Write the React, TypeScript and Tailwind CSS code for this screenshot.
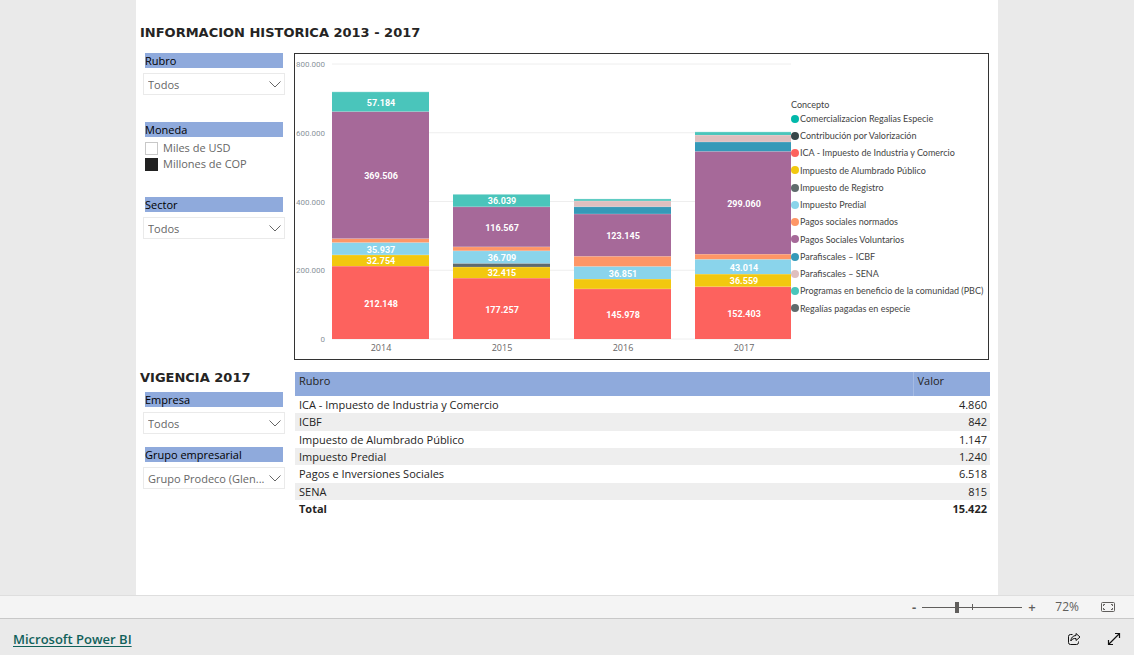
import React, { useState } from "react";

type Segment = { concept: string; value: number; label?: string };
type Bar = { year: string; segments: Segment[] };

const CONCEPTS = [
  { name: "Comercializacion Regalias Especie", color: "#01b8aa" },
  { name: "Contribución por Valorización", color: "#374649" },
  { name: "ICA - Impuesto de Industria y Comercio", color: "#fd625e" },
  { name: "Impuesto de Alumbrado Público", color: "#f2c80f" },
  { name: "Impuesto de Registro", color: "#5f6b6d" },
  { name: "Impuesto Predial", color: "#8ad4eb" },
  { name: "Pagos sociales normados", color: "#fe9666" },
  { name: "Pagos Sociales Voluntarios", color: "#a66999" },
  { name: "Parafiscales – ICBF", color: "#3599b8" },
  { name: "Parafiscales – SENA", color: "#dfbfbf" },
  { name: "Programas en beneficio de la comunidad (PBC)", color: "#4ac5bb" },
  { name: "Regalías pagadas en especie", color: "#5f6b6d" },
];

const COLORS: Record<string, string> = {
  ica: "#fd625e",
  alumbrado: "#f2c80f",
  registro: "#5f6b6d",
  predial: "#8ad4eb",
  normados: "#fe9666",
  voluntarios: "#a66999",
  icbf: "#3599b8",
  sena: "#dfbfbf",
  pbc: "#4ac5bb",
};

const BARS: Bar[] = [
  {
    year: "2014",
    segments: [
      { concept: "ica", value: 212148, label: "212.148" },
      { concept: "alumbrado", value: 32754, label: "32.754" },
      { concept: "predial", value: 35937, label: "35.937" },
      { concept: "normados", value: 11500 },
      { concept: "voluntarios", value: 369506, label: "369.506" },
      { concept: "pbc", value: 57184, label: "57.184" },
    ],
  },
  {
    year: "2015",
    segments: [
      { concept: "ica", value: 177257, label: "177.257" },
      { concept: "alumbrado", value: 32415, label: "32.415" },
      { concept: "registro", value: 10500 },
      { concept: "predial", value: 36709, label: "36.709" },
      { concept: "normados", value: 11500 },
      { concept: "voluntarios", value: 116567, label: "116.567" },
      { concept: "pbc", value: 36039, label: "36.039" },
    ],
  },
  {
    year: "2016",
    segments: [
      { concept: "ica", value: 145978, label: "145.978" },
      { concept: "alumbrado", value: 28500 },
      { concept: "predial", value: 36851, label: "36.851" },
      { concept: "normados", value: 29500 },
      { concept: "voluntarios", value: 123145, label: "123.145" },
      { concept: "icbf", value: 21000 },
      { concept: "sena", value: 17000 },
      { concept: "pbc", value: 5500 },
    ],
  },
  {
    year: "2017",
    segments: [
      { concept: "ica", value: 152403, label: "152.403" },
      { concept: "alumbrado", value: 36559, label: "36.559" },
      { concept: "predial", value: 43014, label: "43.014" },
      { concept: "normados", value: 15000 },
      { concept: "voluntarios", value: 299060, label: "299.060" },
      { concept: "icbf", value: 27500 },
      { concept: "sena", value: 20000 },
      { concept: "pbc", value: 9000 },
    ],
  },
];

const ROWS = [
  ["ICA - Impuesto de Industria y Comercio", "4.860"],
  ["ICBF", "842"],
  ["Impuesto de Alumbrado Público", "1.147"],
  ["Impuesto Predial", "1.240"],
  ["Pagos e Inversiones Sociales", "6.518"],
  ["SENA", "815"],
];

const AXIS = ["0", "200.000", "400.000", "600.000", "800.000"];
const BASE = 285;
const PLOT_HEIGHT = 275;
const MAX = 800000;

function StackedChart() {
  return (
    <svg
      viewBox="0 0 496 305"
      className="block w-[496px] shrink-0"
      role="img"
      aria-label="Valores por concepto y año"
    >
      {AXIS.map((t, i) => {
        const y = BASE - (i * PLOT_HEIGHT) / 4;
        return (
          <g key={t}>
            <line x1="37" x2="496" y1={y} y2={y} stroke="#eeeeee" strokeWidth="1" />
            <text
              x="30"
              y={y + 3}
              textAnchor="end"
              className="fill-[#8a949c] font-['Roboto',sans-serif] text-[8px]"
            >
              {t}
            </text>
          </g>
        );
      })}
      {BARS.map((bar, i) => {
        const x = 37 + i * 121;
        let sum = 0;
        return (
          <g key={bar.year}>
            {bar.segments.map((s) => {
              const bottom = BASE - (sum / MAX) * PLOT_HEIGHT;
              sum += s.value;
              const top = BASE - (sum / MAX) * PLOT_HEIGHT;
              return (
                <g key={s.concept}>
                  <rect x={x} y={top} width="97" height={bottom - top} fill={COLORS[s.concept]} />
                  <line x1={x} x2={x + 97} y1={top} y2={top} stroke="#ffffff" strokeOpacity="0.3" />
                  {s.label && (
                    <text
                      x={x + 49}
                      y={(top + bottom) / 2 + 4}
                      textAnchor="middle"
                      className="fill-white font-['Roboto',sans-serif] text-[9px] font-bold"
                    >
                      {s.label}
                    </text>
                  )}
                </g>
              );
            })}
            <text
              x={x + 49}
              y="297"
              textAnchor="middle"
              className="fill-[#666666] font-['Open_Sans',sans-serif] text-[9px]"
            >
              {bar.year}
            </text>
          </g>
        );
      })}
    </svg>
  );
}

function SlicerTitle({ children, htmlFor }: { children: React.ReactNode; htmlFor?: string }) {
  const cls = "ml-[5px] mr-[2px] block h-[15px] bg-[#8faadc] text-[11px] leading-[16px] text-black";
  return htmlFor ? (
    <label htmlFor={htmlFor} className={cls}>
      {children}
    </label>
  ) : (
    <legend className="contents">
      <span className={cls}>{children}</span>
    </legend>
  );
}

function Dropdown({ id, title, value }: { id: string; title: string; value: string }) {
  return (
    <div>
      <SlicerTitle htmlFor={id}>{title}</SlicerTitle>
      <div className="ml-[3px] mt-[5px] grid items-center border border-[#eaeaea] bg-white">
        <select
          id={id}
          className="col-start-1 row-start-1 h-5 w-full appearance-none bg-transparent pl-1 pr-5 pt-px text-[11px] leading-5 text-[#666666] outline-none"
        >
          <option>{value}</option>
        </select>
        <svg
          viewBox="0 0 12 7"
          className="pointer-events-none col-start-1 row-start-1 mr-[3px] h-[7px] w-3 justify-self-end"
          fill="none"
          stroke="#666666"
          strokeWidth="1"
        >
          <path d="M.5.5 6 6 11.5.5" />
        </svg>
      </div>
    </div>
  );
}

function Check({ label, initial }: { label: string; initial: boolean }) {
  const [on, setOn] = useState(initial);
  return (
    <label className="flex h-4 items-center gap-[5px] text-[11px] leading-4 text-[#666666]">
      <input
        type="checkbox"
        checked={on}
        onChange={() => setOn(!on)}
        className="size-[13px] appearance-none border border-[#c8c8c8] bg-white checked:border-[#212121] checked:bg-[#212121]"
      />
      {label}
    </label>
  );
}

function Heading({ children }: { children: React.ReactNode }) {
  return (
    <h2 className="h-4 whitespace-nowrap font-['DejaVu_Sans',sans-serif] text-[13px] font-bold leading-[18px] text-[#252423]">
      {children}
    </h2>
  );
}

export default function App() {
  const [zoom, setZoom] = useState(72);
  return (
    <div className="flex min-h-screen flex-col bg-[#eaeaea] font-['Open_Sans',sans-serif]">
      <main className="mx-auto w-full max-w-[862px] grow bg-white pl-1 pr-2 pt-6">
        <section>
          <Heading>INFORMACION HISTORICA 2013 - 2017</Heading>
          <div className="mt-[13px] flex gap-[9px]">
            <div className="w-[145px] shrink-0">
              <Dropdown id="rubro" title="Rubro" value="Todos" />
              <fieldset className="mt-[27px]">
                <SlicerTitle>Moneda</SlicerTitle>
                <div className="ml-[5px] mt-[3px]">
                  <Check label="Miles de USD" initial={false} />
                  <Check label="Millones de COP" initial={true} />
                </div>
              </fieldset>
              <div className="mt-[25px]">
                <Dropdown id="sector" title="Sector" value="Todos" />
              </div>
            </div>
            <div className="mr-[1px] flex min-w-0 grow border border-[#333333]">
              <StackedChart />
              <div className="pt-[45px] font-['Lato',sans-serif] text-[9px] text-[#444444]">
                <p className="h-[11px] leading-[12px]">Concepto</p>
                <ul className="grid h-[207px] auto-rows-fr">
                  {CONCEPTS.map((c) => (
                    <li key={c.name} className="flex items-center gap-[1px] whitespace-nowrap">
                      <span className="size-2 rounded-full" style={{ backgroundColor: c.color }} />
                      {c.name}
                    </li>
                  ))}
                </ul>
              </div>
            </div>
          </div>
        </section>

        <section className="mt-[9px] flex items-start gap-[10px]">
          <div className="w-[145px] shrink-0">
            <Heading>VIGENCIA 2017</Heading>
            <div className="mt-[7px] space-y-[13px]">
              <Dropdown id="empresa" title="Empresa" value="Todos" />
              <Dropdown id="grupo" title="Grupo empresarial" value="Grupo Prodeco (Glen..." />
            </div>
          </div>
          <table className="mt-[3px] h-[145px] grow border-collapse text-[11px] text-[#252423]">
            <thead>
              <tr className="h-6 bg-[#8faadc] text-left align-top leading-[18px]">
                <th className="border-r border-[#a5bbe3] pl-1 font-normal">Rubro</th>
                <th className="w-[77px] pl-1 font-normal">Valor</th>
              </tr>
            </thead>
            <tbody className="leading-[17px]">
              {ROWS.map(([name, value]) => (
                <tr key={name} className="even:bg-[#eeeeee]">
                  <td className="py-0 pl-1">{name}</td>
                  <td className="py-0 pr-[3px] text-right">{value}</td>
                </tr>
              ))}
            </tbody>
            <tfoot className="leading-[17px]">
              <tr className="font-bold">
                <td className="pl-1">Total</td>
                <td className="pr-[3px] text-right">15.422</td>
              </tr>
            </tfoot>
          </table>
        </section>
      </main>

      <div className="flex h-6 items-center justify-end border-b border-t border-b-[#c8c8c8] border-t-[#dedede] bg-[#f4f4f4] pr-[18px] text-[#605e5c]">
        <button type="button" aria-label="Alejar" onClick={() => setZoom(zoom - 10)} className="w-3 text-[13px] font-bold leading-5">
          -
        </button>
        <div className="relative mx-[2px] flex h-3 w-[100px] items-center">
          <span className="absolute left-[50px] top-[3px] h-[6px] w-px bg-[#605e5c]" />
          <input
            type="range"
            aria-label="Zoom"
            min={0}
            max={210}
            value={zoom}
            onChange={(e) => setZoom(Number(e.target.value))}
            className="m-0 h-px w-full appearance-none bg-[#605e5c] [&::-webkit-slider-thumb]:h-[11px] [&::-webkit-slider-thumb]:w-1 [&::-webkit-slider-thumb]:appearance-none [&::-webkit-slider-thumb]:bg-[#605e5c]"
          />
        </div>
        <button type="button" aria-label="Acercar" onClick={() => setZoom(zoom + 10)} className="w-4 text-[13px] font-semibold leading-5">
          +
        </button>
        <span className="w-[39px] text-right text-[12px]">{zoom}%</span>
        <button type="button" aria-label="Ajustar a la página" className="ml-[22px]">
          <svg viewBox="0 0 15 11" className="block h-[11px] w-[15px]" fill="none" stroke="#605e5c">
            <rect x=".5" y=".5" width="13" height="9" rx="1" />
            <path d="M2.500 4V2.500H4M10 2.500h1.500V4M11.500 6v1.500H10M4 7.500H2.500V6" />
          </svg>
        </button>
      </div>

      <footer className="flex h-9 items-center justify-between px-[13px] pt-[3px]">
        <a href="#powerbi" className="text-[13px] font-semibold leading-5 text-[#11615b] underline underline-offset-2">
          Microsoft Power BI
        </a>
        <div className="flex items-center gap-[26px]">
          <button type="button" aria-label="Compartir">
            <svg viewBox="0 0 14 14" className="block size-[14px]" fill="none" stroke="#111111" strokeLinejoin="round">
              <path d="M5.500 2.500H3.500a2 2 0 0 0-2 2v6a2 2 0 0 0 2 2h6a2 2 0 0 0 2-2V9.500" />
              <path d="M9 1.500 13 5 9 8.500V6.500C6.500 6.300 5 7 3.800 9 4 5.500 6 3.700 9 3.500z" />
            </svg>
          </button>
          <button type="button" aria-label="Pantalla completa">
            <svg viewBox="0 0 14 14" className="block size-[14px]" fill="none" stroke="#111111" strokeWidth="1.200">
              <path d="M8 1.500h4.500V6M12.500 1.500l-11 11M1.500 8v4.500H6" />
            </svg>
          </button>
        </div>
      </footer>
    </div>
  );
}
